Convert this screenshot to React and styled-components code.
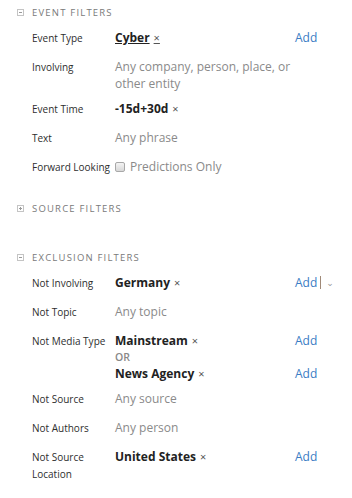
import React from 'react';
import styled, { createGlobalStyle } from 'styled-components';

const GlobalStyle = createGlobalStyle`
  html, body {
    margin: 0;
    padding: 0;
    background: #ffffff;
    font-family: "Open Sans", "DejaVu Sans", sans-serif;
  }
`;

const Page = styled.div`
  width: 352px;
  padding: 4px 0 0 17px;
  box-sizing: border-box;
`;

const Section = styled.div`
  margin-bottom: ${p => (p.collapsed ? '32px' : '17px')};
`;

const Heading = styled.div`
  display: flex;
  align-items: center;
  height: 17px;
  margin-bottom: 4px;
  font-size: 9.5px;
  letter-spacing: 1.2px;
  color: #7a7a7a;
  text-transform: uppercase;
`;

const Toggle = styled.span`
  position: relative;
  width: 7px;
  height: 7px;
  border: 1px solid #c4c4c4;
  box-sizing: border-box;
  margin-right: 8px;
  &::before {
    content: '';
    position: absolute;
    left: 1px;
    top: 2px;
    width: 3px;
    height: 1px;
    background: #9a9a9a;
  }
  &::after {
    content: '';
    display: ${p => (p.open ? 'none' : 'block')};
    position: absolute;
    left: 2px;
    top: 1px;
    width: 1px;
    height: 3px;
    background: #9a9a9a;
  }
`;

const Row = styled.div`
  display: grid;
  grid-template-columns: 83px 180px 1fr;
  padding: 4px 0 4px 15px;
  min-height: 21px;
  line-height: 17px;
`;

const Label = styled.div`
  font-size: 10px;
  color: #2e2e2e;
  padding-top: 1px;
`;

const Values = styled.div`
  display: flex;
  flex-direction: column;
`;

const Placeholder = styled.div`
  font-size: 12px;
  color: #8a8a8a;
`;

const Chip = styled.div`
  font-size: 12px;
  font-weight: 700;
  color: #222;
  span {
    text-decoration: ${p => (p.underline ? 'underline' : 'none')};
  }
`;

const Remove = styled.span`
  font-weight: 400;
  font-size: 11px;
  color: #555;
  margin-left: 4px;
`;

const Or = styled.div`
  font-size: 10.5px;
  font-weight: 600;
  color: #888;
  line-height: 16px;
`;

const Actions = styled.div`
  display: flex;
  flex-direction: column;
`;

const Add = styled.div`
  font-size: 12px;
  color: #3a7cc4;
  margin-top: ${p => (p.offset ? `${p.offset}px` : '0')};
  display: flex;
  align-items: center;
`;

const Sep = styled.span`
  display: inline-block;
  width: 1px;
  height: 13px;
  background: #a08a78;
  margin: 0 5px 0 3px;
`;

const Caret = styled.span`
  font-size: 9px;
  color: #999;
  line-height: 10px;
`;

const CheckLine = styled.label`
  display: flex;
  align-items: center;
  font-size: 12px;
  color: #8a8a8a;
`;

const Box = styled.span`
  width: 10px;
  height: 10px;
  border: 1px solid #a8a8a8;
  border-radius: 2px;
  box-sizing: border-box;
  background: linear-gradient(#f4f4f4, #d8d8d8);
  margin-right: 5px;
`;

function Value({ text, underline }) {
  return (
    <Chip underline={underline}>
      <span>{text}</span>
      <Remove>×</Remove>
    </Chip>
  );
}

export default function App() {
  return (
    <Page>
      <GlobalStyle />
      <Section>
        <Heading><Toggle open />Event Filters</Heading>
        <Row>
          <Label>Event Type</Label>
          <Values><Value text="Cyber" underline /></Values>
          <Actions><Add>Add</Add></Actions>
        </Row>
        <Row>
          <Label>Involving</Label>
          <Values><Placeholder>Any company, person, place, or other entity</Placeholder></Values>
        </Row>
        <Row>
          <Label>Event Time</Label>
          <Values><Value text="-15d+30d" /></Values>
        </Row>
        <Row>
          <Label>Text</Label>
          <Values><Placeholder>Any phrase</Placeholder></Values>
        </Row>
        <Row>
          <Label>Forward Looking</Label>
          <Values><CheckLine><Box />Predictions Only</CheckLine></Values>
        </Row>
      </Section>

      <Section collapsed>
        <Heading><Toggle />Source Filters</Heading>
      </Section>

      <Section>
        <Heading><Toggle open />Exclusion Filters</Heading>
        <Row>
          <Label>Not Involving</Label>
          <Values><Value text="Germany" /></Values>
          <Actions><Add>Add<Sep /><Caret>⌄</Caret></Add></Actions>
        </Row>
        <Row>
          <Label>Not Topic</Label>
          <Values><Placeholder>Any topic</Placeholder></Values>
        </Row>
        <Row>
          <Label>Not Media Type</Label>
          <Values>
            <Value text="Mainstream" />
            <Or>OR</Or>
            <Value text="News Agency" />
          </Values>
          <Actions>
            <Add>Add</Add>
            <Add offset={16}>Add</Add>
          </Actions>
        </Row>
        <Row>
          <Label>Not Source</Label>
          <Values><Placeholder>Any source</Placeholder></Values>
        </Row>
        <Row>
          <Label>Not Authors</Label>
          <Values><Placeholder>Any person</Placeholder></Values>
        </Row>
        <Row>
          <Label>Not Source Location</Label>
          <Values><Value text="United States" /></Values>
          <Actions><Add>Add</Add></Actions>
        </Row>
      </Section>
    </Page>
  );
}
